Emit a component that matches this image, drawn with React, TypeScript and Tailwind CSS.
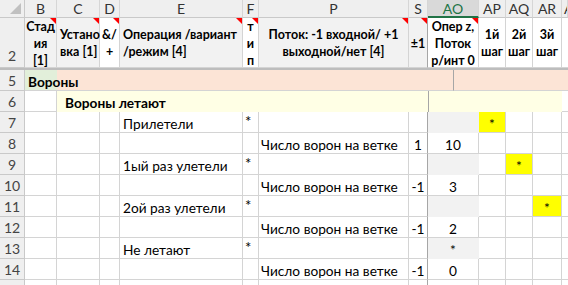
import clsx from 'clsx'
import type { ReactNode } from 'react'

const col = {
  rh: 'w-[25px]',
  B: 'w-[32px]',
  C: 'w-[43px]',
  D: 'w-[20px]',
  E: 'w-[123px]',
  F: 'w-[16px]',
  P: 'w-[150px]',
  S: 'w-[19px]',
  AO: 'w-[51px]',
  AP: 'w-[27px]',
  AQ: 'w-[27px]',
  AR: 'w-[29px]',
  rest: 'flex-1',
}

type Key = keyof typeof col
const keys: Key[] = ['B', 'C', 'D', 'E', 'F', 'P', 'S', 'AO', 'AP', 'AQ', 'AR', 'rest']

function Note() {
  return <span className="absolute top-0 right-0 w-0 h-0 border-t-[6px] border-l-[6px] border-t-[#ff0000] border-l-transparent" />
}

function Cell({ k, className, children, note }: { k: Key; className?: string; children?: ReactNode; note?: boolean }) {
  return (
    <div
      className={clsx(
        'relative shrink-0 border-r border-b border-[#d4d4d4] overflow-visible whitespace-nowrap',
        col[k],
        k === 'S' && 'border-r-[#a6a6a6]',
        className
      )}
    >
      {children}
      {note && <Note />}
    </div>
  )
}

function RowHead({ n, className }: { n?: string; className?: string }) {
  return (
    <div
      className={clsx(
        'shrink-0 w-[25px] bg-[#efefef] border-r border-b border-[#c9c9c9] text-center text-[14px] leading-[17px] font-normal text-[#444]',
        className
      )}
    >
      {n}
    </div>
  )
}

function ColumnLetters() {
  const labels: Record<Key, string> = {
    rh: '', B: 'B', C: 'C', D: 'D', E: 'E', F: 'F', P: 'P', S: 'S', AO: 'AO', AP: 'AP', AQ: 'AQ', AR: 'AR', rest: 'A',
  }
  return (
    <div className="flex h-[18px]">
      <div className="relative shrink-0 w-[25px] bg-[#efefef] border-r border-b border-[#c9c9c9]">
        <span className="absolute right-[3px] bottom-[3px] w-0 h-0 border-b-[11px] border-l-[11px] border-b-[#c0c0c0] border-l-transparent" />
      </div>
      {keys.map(k => (
        <div
          key={k}
          className={clsx(
            'shrink-0 flex items-center border-r border-[#d6d6d6] text-[14px] overflow-hidden',
            col[k],
            k === 'rest' ? 'justify-start pl-[2px]' : 'justify-center',
            k === 'AO'
              ? 'bg-[#d9d9d9] text-[#217346] border-b-2 border-b-[#217346]'
              : 'bg-[#efefef] text-[#333] border-b border-b-[#c9c9c9]'
          )}
        >
          {labels[k]}
        </div>
      ))}
    </div>
  )
}

function HeaderRow() {
  const grey = 'bg-[#f2f2f2]'
  const three = 'flex flex-col items-center'
  const two = 'flex flex-col pt-[8px]'
  return (
    <div className="flex h-[50px] font-bold text-[12.5px] leading-[17px]">
      <RowHead n="2" className="pt-[29px]" />
      <Cell k="B" note className={clsx(grey, three)}>
        <span>Стад</span>
        <span>ия</span>
        <span>[1]</span>
      </Cell>
      <Cell k="C" note className={clsx(grey, two, 'pl-[3px]')}>
        <span>Устано</span>
        <span>вка [1]</span>
      </Cell>
      <Cell k="D" note className={clsx('bg-white', two, 'items-center')}>
        <span>&amp;/</span>
        <span>+</span>
      </Cell>
      <Cell k="E" note className={clsx(grey, two, 'pl-[3px]')}>
        <span>Операция /вариант</span>
        <span>/режим [4]</span>
      </Cell>
      <Cell k="F" note className={clsx('bg-white', three)}>
        <span>т</span>
        <span>и</span>
        <span>п</span>
      </Cell>
      <Cell k="P" note className={clsx(grey, two, 'items-center')}>
        <span>Поток: -1 входной/ +1</span>
        <span>выходной/нет [4]</span>
      </Cell>
      <Cell k="S" note className={clsx(grey, 'text-center pt-[17px]')}>
        ±1
      </Cell>
      <Cell k="AO" note className={clsx('bg-white', three)}>
        <span>Опер z,</span>
        <span>Поток</span>
        <span>р/инт 0</span>
      </Cell>
      {(['AP', 'AQ', 'AR'] as Key[]).map((k, i) => (
        <Cell key={k} k={k} className={clsx('bg-white', two, 'items-center')}>
          <span>{i + 1}й</span>
          <span>шаг</span>
        </Cell>
      ))}
      <Cell k="rest" className="bg-white border-r-0" />
    </div>
  )
}

function FreezeLine() {
  return <div className="h-[2px] bg-[#bdbdbd]" />
}

type DataRow = {
  n: string
  op?: string
  flow?: string
  sign?: string
  ao?: string
  step?: 'AP' | 'AQ' | 'AR'
}

const rows: DataRow[] = [
  { n: '7', op: 'Прилетели', step: 'AP' },
  { n: '8', flow: 'Число ворон на ветке', sign: '1', ao: '10' },
  { n: '9', op: '1ый раз улетели', step: 'AQ' },
  { n: '10', flow: 'Число ворон на ветке', sign: '-1', ao: '3' },
  { n: '11', op: '2ой раз улетели', step: 'AR' },
  { n: '12', flow: 'Число ворон на ветке', sign: '-1', ao: '2' },
  { n: '13', op: 'Не летают', ao: '*' },
  { n: '14', flow: 'Число ворон на ветке', sign: '-1', ao: '0' },
]

function Row({ r }: { r: DataRow }) {
  const isOp = r.op !== undefined
  return (
    <div className="flex h-[21px] text-[13.7px] leading-[17px]">
      <RowHead n={r.n} className="pt-[2px]" />
      <Cell k="B" />
      <Cell k="C" />
      <Cell k="D" />
      <Cell k="E" className="pl-[3px] pt-[3px]">{r.op}</Cell>
      <Cell k="F" className="pl-[2px] pt-[1px] text-[15px]">{isOp ? '*' : ''}</Cell>
      <Cell k="P" className="pl-[2px] pt-[3px]">{r.flow}</Cell>
      <Cell k="S" className="text-center pt-[3px]">{r.sign}</Cell>
      <Cell k="AO" className={clsx('text-center pt-[3px]', isOp && 'bg-[#f2f2f2] border-transparent')}>{r.ao}</Cell>
      {(['AP', 'AQ', 'AR'] as const).map(k => (
        <Cell key={k} k={k} className={clsx('text-center pt-[3px]', r.step === k && 'bg-[#ffff00]')}>
          {r.step === k ? '*' : ''}
        </Cell>
      ))}
      <Cell k="rest" className="border-r-0" />
    </div>
  )
}

export default function App() {
  return (
    <div className="w-[568px] h-[285px] overflow-hidden bg-white text-black font-['Lato','Open_Sans',sans-serif]">
      <ColumnLetters />
      <HeaderRow />
      <FreezeLine />
      <div className="flex h-[21px] font-bold text-[13.7px] leading-[17px]">
        <RowHead n="5" className="pt-[2px]" />
        <div className="shrink-0 w-[32px] bg-[#e2efda] border-b border-[#d4d4d4] pl-[3px] pt-[3px] whitespace-nowrap overflow-visible relative z-10">
          Вороны
        </div>
        <div className="shrink-0 w-[397px] bg-[#fce4d6] border-b border-[#d4d4d4] border-r border-r-[#a6a6a6]" />
        <div className="shrink-0 w-[133px] bg-[#fce4d6] border-b border-[#d4d4d4]" />
        <div className="flex-1 border-b border-[#d4d4d4]" />
      </div>
      <div className="flex h-[21px] font-bold text-[13.7px] leading-[17px]">
        <RowHead n="6" className="pt-[2px]" />
        <Cell k="B" />
        <div className="shrink-0 w-[372px] bg-[#ffffe5] pl-[8px] pt-[3px] whitespace-nowrap border-r border-r-[#a6a6a6]">
          Вороны летают
        </div>
        <div className="shrink-0 w-[133px] bg-[#ffffe5]" />
        <div className="flex-1 border-b border-[#d4d4d4]" />
      </div>
      {rows.map(r => (
        <Row key={r.n} r={r} />
      ))}
      <div className="flex h-[21px]">
        <RowHead />
        {keys.map(k => (
          <Cell key={k} k={k} className={k === 'rest' ? 'border-r-0' : ''} />
        ))}
      </div>
    </div>
  )
}
